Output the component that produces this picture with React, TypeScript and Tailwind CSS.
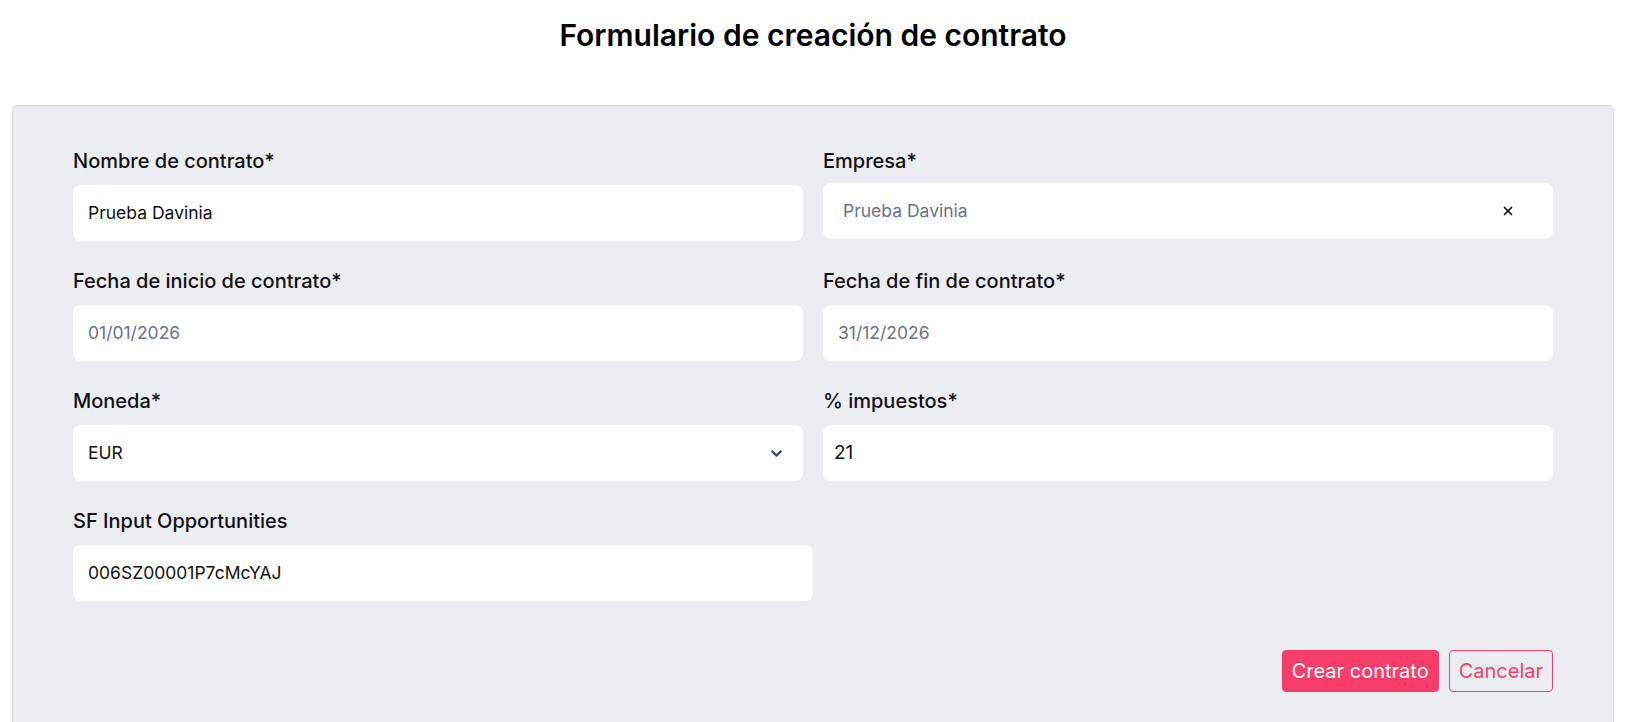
import { ChevronDown, X } from "lucide-react";

const labelCls = "block text-[20px] leading-[28px] font-medium text-[#111] mb-[10px]";
const inputCls =
  "h-[56px] rounded-[8px] bg-white flex items-center text-[17.5px] leading-[24px]";

function Field({ label, children }: { label: string; children: React.ReactNode }) {
  return (
    <div>
      <label className={labelCls}>{label}</label>
      {children}
    </div>
  );
}

export default function App() {
  return (
    <main className="font-['Inter',sans-serif] bg-white min-h-[722px]">
      <h1 className="text-center text-[30px] leading-[36px] font-semibold text-black pt-[17px] pb-[52px]">
        Formulario de creación de contrato
      </h1>

      <div className="mx-[12px] bg-[#ecedf1] border border-[#d9dbe1] rounded-[5px] px-[60px] pt-[41px] pb-[40px]">
        <div className="grid grid-cols-2 gap-x-[20px] gap-y-[26px]">
          {/* Nombre */}
          <Field label="Nombre de contrato*">
            <div className={`${inputCls} w-full px-[15px] text-[#111]`}>Prueba Davinia</div>
          </Field>

          {/* Empresa */}
          <div>
            <label className={labelCls}>Empresa*</label>
            <div className={`${inputCls} w-full -mt-[2px] px-[20px] justify-between text-[#6b7280]`}>
              <span>Prueba Davinia</span>
              <X size={14} strokeWidth={3} className="text-[#111] mr-[18px]" />
            </div>
          </div>

          {/* Fechas */}
          <Field label="Fecha de inicio de contrato*">
            <div className={`${inputCls} w-full px-[15px] text-[#6b7280]`}>01/01/2026</div>
          </Field>
          <Field label="Fecha de fin de contrato*">
            <div className={`${inputCls} w-full px-[15px] text-[#6b7280]`}>31/12/2026</div>
          </Field>

          {/* Moneda */}
          <Field label="Moneda*">
            <div className={`${inputCls} w-full px-[15px] justify-between text-[#111]`}>
              <span>EUR</span>
              <ChevronDown size={17} strokeWidth={3} className="text-[#3a4670] mr-[3px]" />
            </div>
          </Field>
          <Field label="% impuestos*">
            <div className={`${inputCls} w-full px-[11px] !text-[19px] text-[#111]`}>21</div>
          </Field>

          {/* SF */}
          <Field label="SF Input Opportunities">
            <div className={`${inputCls} w-[740px] px-[15px] text-[#111]`}>006SZ00001P7cMcYAJ</div>
          </Field>
        </div>

        <div className="flex justify-end gap-[10px] mt-[49px]">
          <button className="h-[42px] px-[9px] rounded-[4px] bg-[#f73d6a] text-white text-[20px] border border-[#f73d6a]">
            Crear contrato
          </button>
          <button className="h-[42px] px-[9px] rounded-[4px] bg-transparent text-[#f73d6a] text-[20px] border border-[#f73d6a]">
            Cancelar
          </button>
        </div>
      </div>
    </main>
  );
}
